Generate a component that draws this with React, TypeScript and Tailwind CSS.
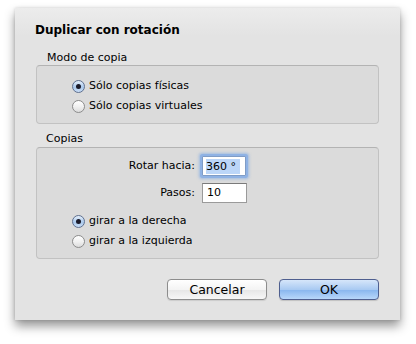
import React from "react";

const font = { fontFamily: '"DejaVu Sans", "Liberation Sans", sans-serif' };

function Radio({ checked, label }: { checked?: boolean; label: string }) {
  return (
    <div className="flex h-[20px] items-center">
      <div
        className={
          "flex h-[13px] w-[13px] items-center justify-center rounded-full border " +
          (checked
            ? "border-[#5e6f8f] bg-[linear-gradient(#e6f0fb,#a9c8ec_55%,#c9ddf5)]"
            : "border-[#8c8c8c] bg-[linear-gradient(#ffffff,#f1f1f1_50%,#dcdcdc)]")
        }
      >
        {checked && <div className="h-[5px] w-[5px] rounded-full bg-[#1a1a2a]" />}
      </div>
      <span className="ml-[4px] text-[11px] leading-[14px] text-black">{label}</span>
    </div>
  );
}

export default function App() {
  return (
    <div className="h-[344px] w-[416px] overflow-hidden bg-white pt-[8px] pl-[15px]" style={font}>
      <div className="flex h-[312px] w-[385px] flex-col bg-[linear-gradient(#ececec,#e3e3e3_28px)] px-[21px] shadow-[0_6px_10px_rgba(0,0,0,0.42),0_0_3px_rgba(0,0,0,0.15)]">
        <div className="mt-[14px] ml-[-1px] h-[16px] text-[12px] font-bold leading-[16px] text-black">
          Duplicar con rotación
        </div>

        <div className="mt-[13px] ml-[11px] h-[14px] text-[11px] leading-[14px] text-black">Modo de copia</div>
        <div className="h-[59px] rounded-[4px] border border-[#c2c2c2] border-t-[#b3b3b3] bg-[#dbdbdb] pt-[10px] pl-[35px]">
          <Radio checked label="Sólo copias físicas" />
          <Radio label="Sólo copias virtuales" />
        </div>

        <div className="mt-[8px] ml-[10px] h-[14px] text-[11px] leading-[14px] text-black">Copias</div>
        <div className="mt-[1px] flex h-[112px] flex-col rounded-[4px] border border-[#c2c2c2] border-t-[#b3b3b3] bg-[#dbdbdb]">
          <div className="mt-[8px] flex h-[20px] items-center">
            <div className="w-[158px] text-right text-[11px] leading-[14px] text-black">Rotar hacia:</div>
            <div className="ml-[7px] flex h-[20px] w-[44px] items-center rounded-[1px] border border-[#7f9cc6] bg-white pl-[3px] shadow-[0_0_0_2px_#8fb2e4,0_0_3px_3px_rgba(110,160,230,0.55)]">
              <span className="bg-[#bcd6f8] pr-[4px] text-[11px] leading-[15px] text-black">360 °</span>
            </div>
          </div>
          <div className="mt-[7px] flex h-[20px] items-center">
            <div className="w-[158px] text-right text-[11px] leading-[14px] text-black">Pasos:</div>
            <div className="ml-[7px] flex h-[20px] w-[45px] items-center border border-[#9a9a9a] border-t-[#7a7a7a] bg-white pl-[4px]">
              <span className="text-[11px] leading-[14px] text-black">10</span>
            </div>
          </div>
          <div className="mt-[8px] flex flex-col pl-[35px]">
            <Radio checked label="girar a la derecha" />
            <Radio label="girar a la izquierda" />
          </div>
        </div>

        <div className="mt-[20px] flex justify-end gap-[12px]">
          <button className="h-[21px] w-[100px] rounded-[4px] border border-[#8d8d8d] bg-[linear-gradient(#ffffff,#f4f4f4_50%,#e6e6e6_51%,#f7f7f7)] text-[12.5px] leading-[18px] text-black shadow-[0_1px_1px_rgba(0,0,0,0.1)]">
            Cancelar
          </button>
          <button className="h-[21px] w-[100px] rounded-[4px] border border-[#4f5f8f] bg-[linear-gradient(#d6e6fa,#a9caf2_50%,#87b5ee_51%,#b8d7fa)] text-[12.5px] leading-[18px] text-black shadow-[0_1px_1px_rgba(0,0,0,0.15)]">
            OK
          </button>
        </div>
      </div>
    </div>
  );
}
